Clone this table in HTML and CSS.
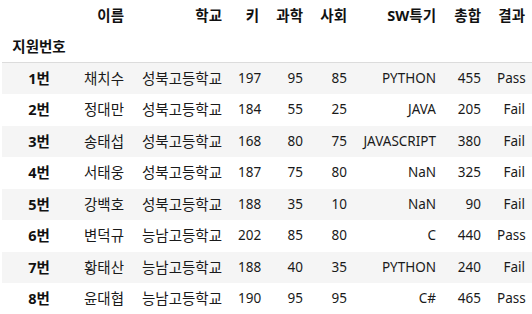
FILE: index.html
```html
<!DOCTYPE html>
<html lang="ko">
<head>
<meta charset="utf-8">
<link rel="stylesheet" href="styles.css">
</head>
<body>
<table class="df">
  <thead>
    <tr class="cols">
      <th class="c0"></th>
      <th class="c1">이름</th>
      <th class="c2">학교</th>
      <th class="c3">키</th>
      <th class="c4">과학</th>
      <th class="c5">사회</th>
      <th class="c6">SW특기</th>
      <th class="c7">총합</th>
      <th class="c8">결과</th>
    </tr>
    <tr class="idxname">
      <th class="idx">지원번호</th>
      <th></th><th></th><th></th><th></th><th></th><th></th><th></th><th></th>
    </tr>
  </thead>
  <tbody>
    <tr><th class="idx">1번</th><td class="ko">채치수</td><td class="ko">성북고등학교</td><td>197</td><td>95</td><td>85</td><td>PYTHON</td><td>455</td><td>Pass</td></tr>
    <tr><th class="idx">2번</th><td class="ko">정대만</td><td class="ko">성북고등학교</td><td>184</td><td>55</td><td>25</td><td>JAVA</td><td>205</td><td>Fail</td></tr>
    <tr><th class="idx">3번</th><td class="ko">송태섭</td><td class="ko">성북고등학교</td><td>168</td><td>80</td><td>75</td><td>JAVASCRIPT</td><td>380</td><td>Fail</td></tr>
    <tr><th class="idx">4번</th><td class="ko">서태웅</td><td class="ko">성북고등학교</td><td>187</td><td>75</td><td>80</td><td>NaN</td><td>325</td><td>Fail</td></tr>
    <tr><th class="idx">5번</th><td class="ko">강백호</td><td class="ko">성북고등학교</td><td>188</td><td>35</td><td>10</td><td>NaN</td><td>90</td><td>Fail</td></tr>
    <tr><th class="idx">6번</th><td class="ko">변덕규</td><td class="ko">능남고등학교</td><td>202</td><td>85</td><td>80</td><td>C</td><td>440</td><td>Pass</td></tr>
    <tr><th class="idx">7번</th><td class="ko">황태산</td><td class="ko">능남고등학교</td><td>188</td><td>40</td><td>35</td><td>PYTHON</td><td>240</td><td>Fail</td></tr>
    <tr><th class="idx">8번</th><td class="ko">윤대협</td><td class="ko">능남고등학교</td><td>190</td><td>95</td><td>95</td><td>C#</td><td>465</td><td>Pass</td></tr>
  </tbody>
</table>
</body>
</html>
```
FILE: styles.css
```css
html, body {
  margin: 0;
  padding: 0;
  overflow: hidden;
  background: #fff;
}
body {
  padding: 0 0 0 2px;
}
.df {
  border-collapse: collapse;
  border-spacing: 0;
  table-layout: fixed;
  width: 531px;
  font-family: "Noto Sans", "Noto Sans CJK KR", sans-serif;
  font-size: 13.5px;
  color: #1a1a1a;
}
.df th, .df td {
  box-sizing: border-box;
  padding: 5px 8px;
  line-height: 21px;
  height: 31px;
  text-align: right;
  white-space: nowrap;
  vertical-align: middle;
}
.df th {
  font-weight: bold;
  font-size: 14.5px;
  color: #111;
}
.df td.ko {
  font-size: 14.5px;
}
.df thead {
  border-bottom: 1px solid #dcdcdc;
}
.df th.idx {
  text-align: center;
}
.df tbody tr,
.df tbody td,
.df tbody th {
  height: 31.5px;
}
.df tbody tr:nth-child(odd) {
  background: #f5f5f5;
}
.c0 { width: 74px; }
.c1 { width: 56px; }
.c2 { width: 98px; }
.c3 { width: 37px; }
.c4 { width: 44px; }
.c5 { width: 44px; }
.c6 { width: 89px; }
.c7 { width: 45px; }
.c8 { width: 44px; }
```
